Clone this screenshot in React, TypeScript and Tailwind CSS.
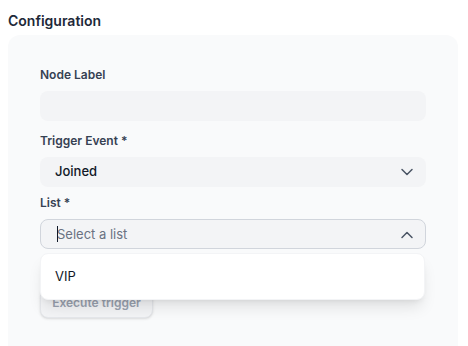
import { ChevronDown, ChevronUp } from "lucide-react";

export default function App() {
  return (
    <div
      className="w-[468px] h-[346px] overflow-hidden bg-white px-2 pt-[11px]"
      style={{ fontFamily: "Inter, 'Noto Sans', sans-serif" }}
    >
      <h2 className="text-sm leading-5 font-semibold text-gray-800 mb-[4px]">
        Configuration
      </h2>

      <div className="w-[450px] h-[400px] rounded-xl bg-gray-50 px-8 pt-8">
        {/* Node label */}
        <div className="mb-3">
          <label className="block text-xs leading-4 font-semibold text-gray-700 mb-2">
            Node Label
          </label>
          <div className="h-[30px] w-[386px] rounded-lg bg-gray-100" />
        </div>

        {/* Trigger event */}
        <div className="mb-2">
          <label className="block text-xs leading-4 font-semibold text-gray-700 mb-2">
            Trigger Event *
          </label>
          <div className="h-[30px] w-[386px] rounded-lg bg-gray-100 flex items-center justify-between pl-[15px] pr-[9px]">
            <span className="text-[13px] font-medium text-gray-900">Joined</span>
            <ChevronDown size={20} strokeWidth={1.8} className="text-gray-600" />
          </div>
        </div>

        {/* List */}
        <div className="relative">
          <label className="block text-xs leading-4 font-semibold text-gray-700 mb-2">
            List *
          </label>
          <div className="h-[30px] w-[386px] rounded-lg bg-gray-100 border border-gray-300 flex items-center justify-between pl-4 pr-2 pt-[1px]">
            <span className="relative text-[13px] text-gray-500">
              <span className="absolute left-0 top-[1px] h-[16px] w-px bg-gray-900" />
              Select a list
            </span>
            <ChevronUp size={20} strokeWidth={1.8} className="text-gray-600" />
          </div>

          <div className="mt-[39px] h-[30px] w-[113px] rounded-lg bg-gray-100 border border-gray-200 shadow-sm flex items-center justify-center text-xs font-semibold text-gray-400">
            Execute trigger
          </div>

          <div className="absolute left-0 top-[58px] w-[385px] h-[47px] rounded-lg bg-white border border-gray-100 shadow-lg flex items-center px-[14px]">
            <span className="text-[13px] text-gray-900">VIP</span>
          </div>
        </div>
      </div>
    </div>
  );
}
